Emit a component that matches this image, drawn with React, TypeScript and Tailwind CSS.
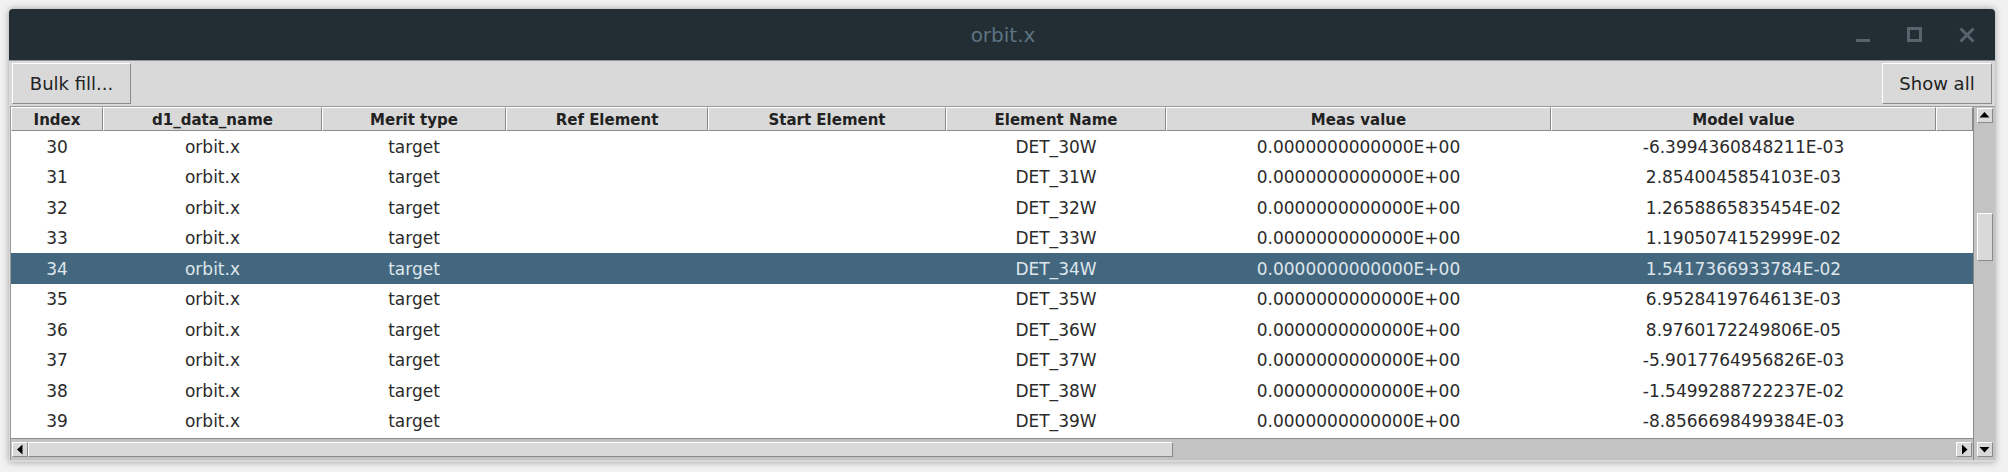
import React from 'react';

type Row = { idx: number; model: string };

const rows: Row[] = [
  { idx: 30, model: '-6.3994360848211E-03' },
  { idx: 31, model: '2.8540045854103E-03' },
  { idx: 32, model: '1.2658865835454E-02' },
  { idx: 33, model: '1.1905074152999E-02' },
  { idx: 34, model: '1.5417366933784E-02' },
  { idx: 35, model: '6.9528419764613E-03' },
  { idx: 36, model: '8.9760172249806E-05' },
  { idx: 37, model: '-5.9017764956826E-03' },
  { idx: 38, model: '-1.5499288722237E-02' },
  { idx: 39, model: '-8.8566698499384E-03' },
];

const headers = [
  'Index',
  'd1_data_name',
  'Merit type',
  'Ref Element',
  'Start Element',
  'Element Name',
  'Meas value',
  'Model value',
  '',
];

const cols = 'grid grid-cols-[92px_219px_184px_202px_238px_220px_385px_385px_37px]';

const bevel = 'border border-t-white border-l-white border-b-[#8a8a8a] border-r-[#8a8a8a] bg-[#d9d9d9]';

function Arrow({ dir }: { dir: 'up' | 'down' | 'left' | 'right' }) {
  const pts = {
    up: '0.5,7.5 10.5,7.5 5.5,2',
    down: '0.5,3 10.5,3 5.5,8.5',
    left: '7.5,0.5 7.5,10.5 2,5.5',
    right: '3,0.5 3,10.5 8.5,5.5',
  }[dir];
  return (
    <div className={`${bevel} w-[16px] h-[15px] flex items-center justify-center`}>
      <svg width="11" height="11" viewBox="0 0 11 11">
        <polygon points={pts} fill="#000" />
      </svg>
    </div>
  );
}

export default function App() {
  return (
    <div className="w-[2008px] h-[472px] bg-[#f1f1f1] overflow-hidden pt-[9px] pl-[9px] font-['DejaVu_Sans',sans-serif]">
      <div className="w-[1986px] h-[453px] flex flex-col bg-[#d9d9d9] rounded-t-[4px] shadow-[0_0_7px_rgba(0,0,0,0.35)]">
        {/* title bar */}
        <div className="h-[52px] grid grid-cols-[1fr_auto_1fr] items-center bg-[#222d34] rounded-t-[4px] border-b border-[#8d9396]">
          <div />
          <div className="text-[20px] text-[#5d7482] pl-[2px] pt-[1px]">orbit.x</div>
          <div className="flex items-center justify-end gap-[37px] pr-[20px]">
            <div className="w-[14px] h-[15px] flex items-end">
              <div className="w-[14px] h-[3px] bg-[#56656d]" />
            </div>
            <div className="w-[15px] h-[15px] border-[3px] border-[#56656d]" />
            <svg width="16" height="16" viewBox="0 0 16 16">
              <path d="M1.5 1.5 L14.5 14.5 M14.5 1.5 L1.5 14.5" stroke="#56656d" strokeWidth="3" />
            </svg>
          </div>
        </div>

        {/* toolbar */}
        <div className="h-[45px] flex items-center justify-between px-[3px]">
          <button className={`${bevel} h-[41px] w-[119px] text-[18px] text-[#222]`}>Bulk fill...</button>
          <button className={`${bevel} h-[41px] w-[110px] text-[18px] text-[#222]`}>Show all</button>
        </div>

        {/* table frame */}
        <div className="flex flex-1 ml-[1px] mb-[2px] border-t border-l border-[#9a9a9a]">
          <div className="flex flex-col w-[1962px]">
            <div className="h-[331px] bg-white overflow-hidden">
              <div className={`${cols} h-[24px]`}>
                {headers.map((h, i) => (
                  <div
                    key={i}
                    className={`${bevel} flex items-center justify-center pt-[3px] text-[15px] font-bold text-[#222] leading-none`}
                  >
                    {h}
                  </div>
                ))}
              </div>
              {rows.map((r) => {
                const sel = r.idx === 34;
                return (
                  <div
                    key={r.idx}
                    className={`${cols} h-[30.5px] items-center pt-[2px] text-[17px] ${
                      sel ? 'bg-[#43677f] text-[#dfe6eb]' : 'text-[#2b2b2b]'
                    }`}
                  >
                    <div className="text-center">{r.idx}</div>
                    <div className="text-center">orbit.x</div>
                    <div className="text-center">target</div>
                    <div />
                    <div />
                    <div className="text-center">DET_{r.idx}W</div>
                    <div className="text-center">0.0000000000000E+00</div>
                    <div className="text-center">{r.model}</div>
                    <div />
                  </div>
                );
              })}
            </div>
            {/* horizontal scrollbar */}
            <div className="h-[22px] flex items-center bg-[#c3c3c3] border-t border-[#8a8a8a] px-[1px]">
              <Arrow dir="left" />
              <div className={`${bevel} h-[15px] w-[1145px]`} />
              <div className="flex-1" />
              <Arrow dir="right" />
            </div>
          </div>
          {/* vertical scrollbar */}
          <div className="w-[22px] flex flex-col items-center bg-[#c3c3c3] border-l border-[#8a8a8a] pt-[1px] pb-[3px]">
            <Arrow dir="up" />
            <div className="h-[90px]" />
            <div className={`${bevel} w-[16px] h-[48px]`} />
            <div className="flex-1" />
            <Arrow dir="down" />
          </div>
        </div>
      </div>
    </div>
  );
}
